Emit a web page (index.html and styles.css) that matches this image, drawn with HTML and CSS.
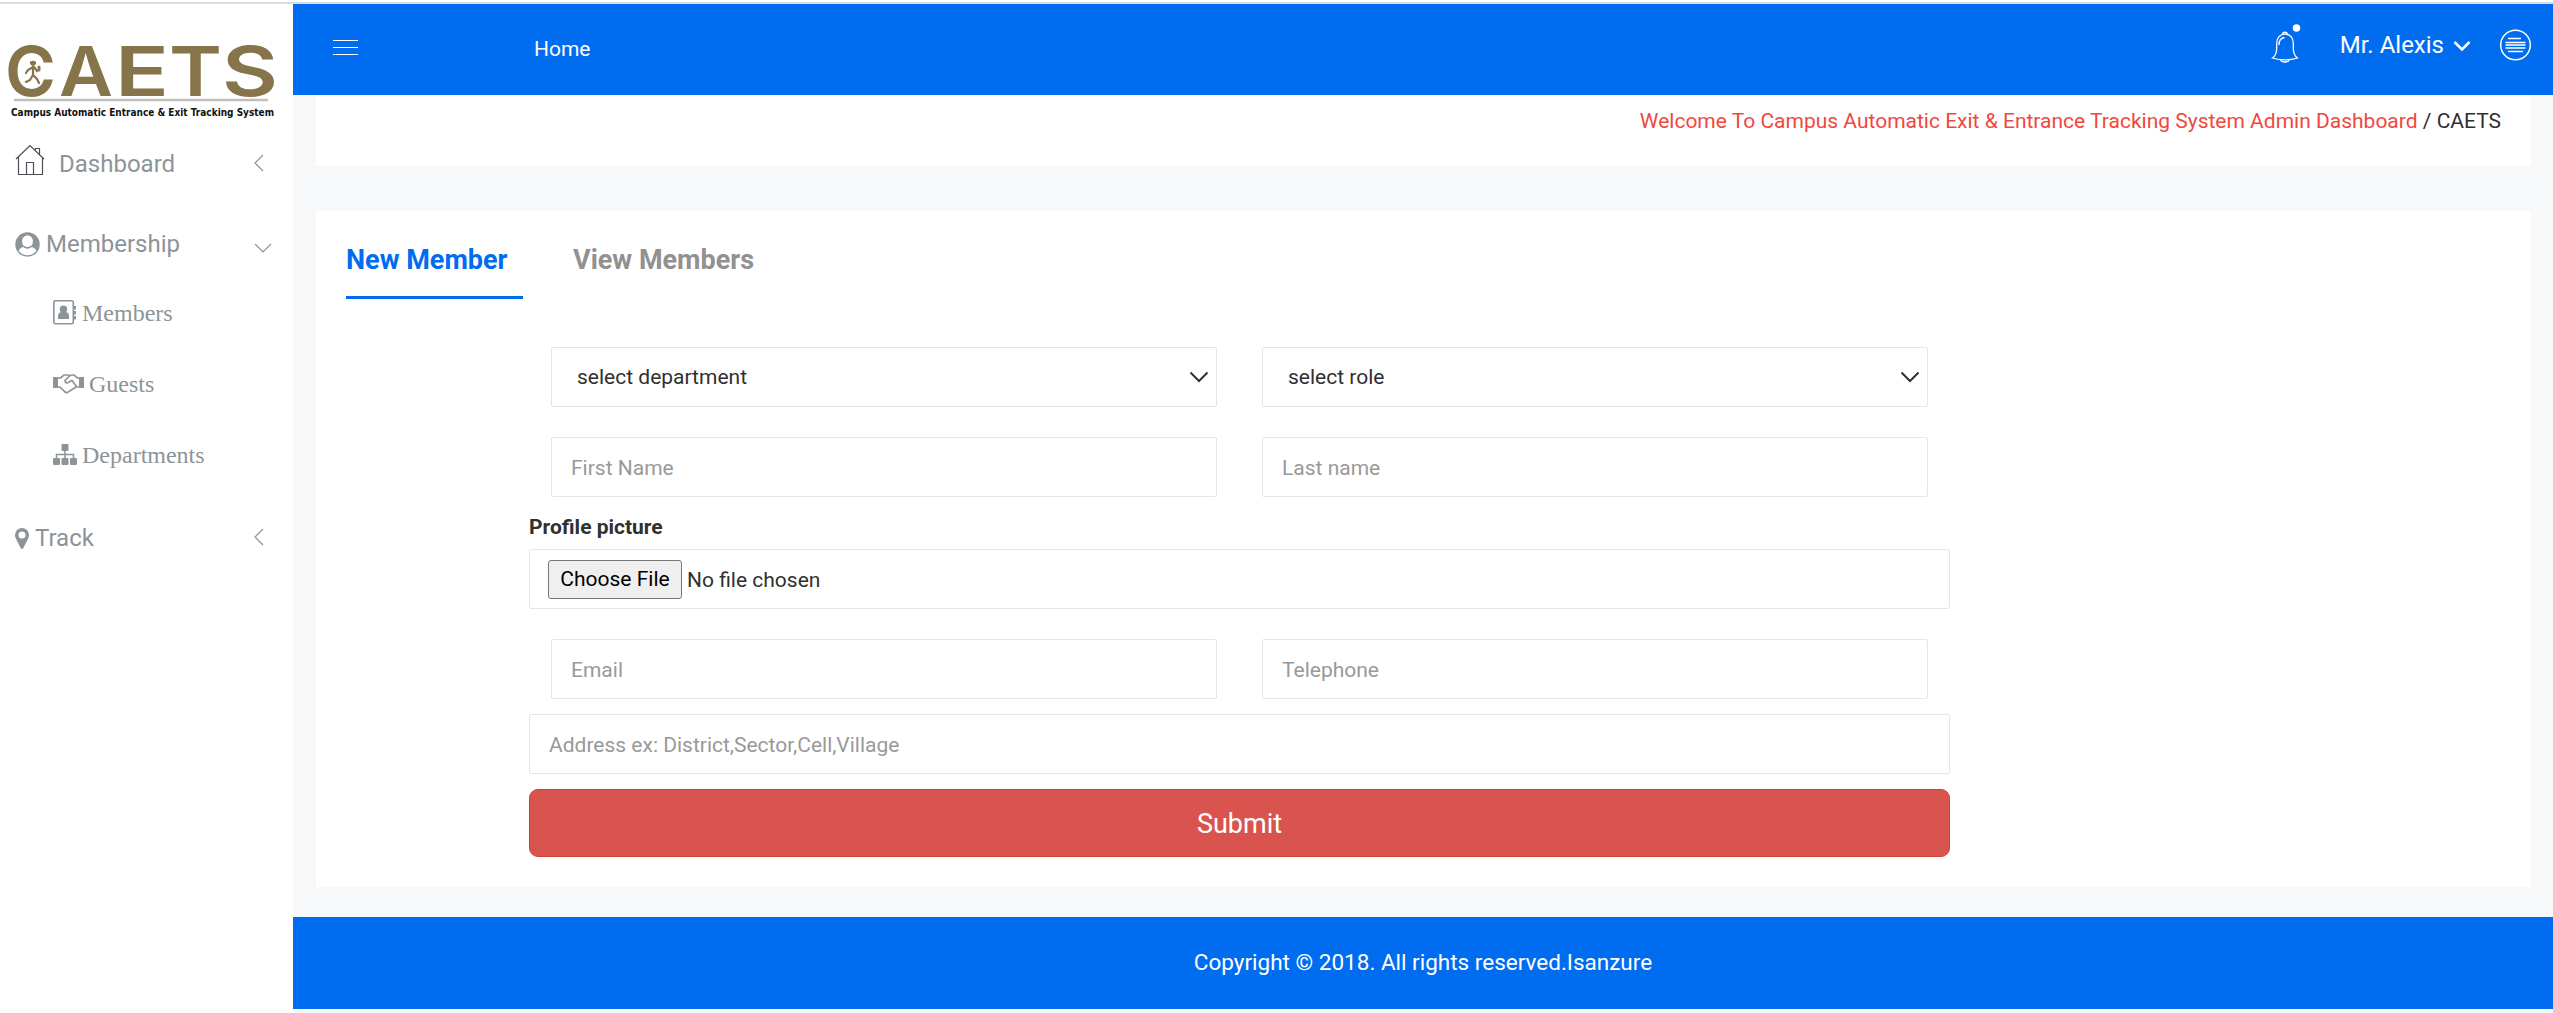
FILE: index.html
```html
<!DOCTYPE html>
<html lang="en">
<head>
<meta charset="utf-8">
<title>CAETS</title>
<link rel="stylesheet" href="styles.css">
</head>
<body>
<div class="topline"></div>
<div class="layout">
  <aside class="sidebar">
    <svg class="logo" viewBox="0 -40 293 120" width="293" height="120">
      <g class="logo-word">
        <text x="5" y="52" textLength="51" lengthAdjust="spacingAndGlyphs">C</text>
        <text x="59" y="52" textLength="54" lengthAdjust="spacingAndGlyphs">A</text>
        <text x="115" y="52" textLength="54" lengthAdjust="spacingAndGlyphs">E</text>
        <text x="169" y="52" textLength="53" lengthAdjust="spacingAndGlyphs">T</text>
        <text x="222" y="52" textLength="56" lengthAdjust="spacingAndGlyphs">S</text>
      </g>
      <g fill="none" stroke="#86754b" stroke-width="2.2" stroke-linecap="round">
        <path d="M33 22v10M33 23l-5 3-2 3M34 23l3 4M33 31l-3 5-4 2M33 31l4 4 2 4"/>
        <ellipse cx="33" cy="19" rx="2" ry="1.2"/>
        <path d="M39 23v3" stroke-width="3"/>
      </g>
      <path d="M14 56H268" stroke="#bfbfbd" stroke-width="2.6"/>
      <text class="logo-tag" x="11" y="72" textLength="263" lengthAdjust="spacingAndGlyphs">Campus Automatic Entrance &amp; Exit Tracking System</text>
    </svg>
    <nav class="menu">
      <a class="item dash"><svg width="30" height="32" viewBox="0 0 30 32"><path d="M1 15 15 1.500 29 15M3.500 13v17.500h24V13M11.500 30.500V18.500h7v12M20.500 6V4.500h4v6" fill="none" stroke="#4b4f55" stroke-width="1.200"/></svg><span>Dashboard</span><svg class="arrow" width="10" height="18" viewBox="0 0 10 18"><path d="M9 1 1 9l8 8"/></svg></a>
      <a class="item member"><svg width="25" height="25" viewBox="0 0 25 25"><circle cx="12.500" cy="12.500" r="12.200" fill="#8d9498"/><path d="M12.500 3.500c3.400 0 5.400 2.500 5.400 5.700 0 2.400-1 4.500-2.600 5.500 3.500.4 5.600 2.300 6 4.200a11 11 0 0 1-17.600 0c.4-1.900 2.500-3.800 6-4.200-1.600-1-2.600-3.100-2.600-5.500 0-3.200 2-5.700 5.400-5.700z" fill="#fff"/><path d="M8.700 14.300c2.200 1.800 5.400 1.800 7.600 0" fill="none" stroke="#8d9498" stroke-width="1.500"/></svg><span>Membership</span><svg class="arrow down" width="18" height="10" viewBox="0 0 18 10"><path d="m1 1 8 8 8-8"/></svg></a>
      <a class="item sub"><svg width="24" height="25" viewBox="0 0 24 25"><rect x=".8" y=".8" width="19.500" height="23" rx="1.500" fill="none" stroke="#8d9498" stroke-width="1.600"/><path d="M21 6h2v3.500h-2zM21 11h2v3.500h-2zM21 16h2v3.500h-2z" fill="#8d9498"/><circle cx="10.500" cy="9.300" r="3.700" fill="#8d9498"/><path d="M5 19v-2.500c0-3 1.500-4.500 3.300-4.500h4.400c1.800 0 3.300 1.500 3.300 4.500V19z" fill="#8d9498"/></svg><span>Members</span></a>
      <a class="item sub"><svg width="31" height="20" viewBox="0 0 31 20"><path d="M0 3h5v11H0zM26 3h5v11h-5z" fill="#8d9498"/><path d="M5 4h2.500L11 1h4l1.500 1L18 1h3l3.500 3H26M5 13h2l4.500 4.500c1.500 1.300 3.200 1.300 4.500 0l7-4.500h3M16.500 2 12 6.500c0 3 3.500 3 5.500.5l1.500-.5 4.500 6" fill="none" stroke="#8d9498" stroke-width="1.700"/></svg><span>Guests</span></a>
      <a class="item sub"><svg width="24" height="21" viewBox="0 0 24 21"><g fill="#8d9498"><rect x="8.500" width="7" height="7" rx="1"/><rect y="14" width="7" height="7" rx="1"/><rect x="8.500" y="14" width="7" height="7" rx="1"/><rect x="17" y="14" width="7" height="7" rx="1"/></g><path d="M12 7v7M3.500 14v-3.500h17V14" fill="none" stroke="#8d9498" stroke-width="1.500"/></svg><span>Departments</span></a>
      <a class="item track"><svg width="14" height="21" viewBox="0 0 14 21"><path fill-rule="evenodd" d="M7 0a7 7 0 0 1 7 7c0 2-.6 3-1.200 4.300L8.200 20.300a1.400 1.400 0 0 1-2.400 0L1.200 11.300C.6 10 0 9 0 7a7 7 0 0 1 7-7zm0 3.500a3.500 3.500 0 1 0 0 7 3.500 3.500 0 0 0 0-7z" fill="#8d9498"/></svg><span>Track</span><svg class="arrow" width="10" height="18" viewBox="0 0 10 18"><path d="M9 1 1 9l8 8"/></svg></a>
    </nav>
  </aside>
  <main class="main">
    <header class="header">
      <svg class="burger" width="25" height="16" viewBox="0 0 25 16"><path d="M0 .5h25M0 7.500h25M0 14.500h25" stroke="#fff"/></svg>
      <a class="home">Home</a>
      <svg class="bell" width="30" height="40" viewBox="0 0 30 40"><g fill="none" stroke="#fff" stroke-width="1.300"><path d="M1.500 34c3-2 4.200-5 4.200-10v-4.500c0-5.500 3-9.300 8.300-9.300s8.300 3.800 8.300 9.300V24c0 5 1.200 8 4.200 10-8 2.500-17 2.500-25 0z"/><path d="M11.500 10.500c0-3 5-3 5 0M9.500 35.500c1 3.300 8 3.300 9 0M8 21c0-4 1.500-7 5.500-7.500"/></g><circle cx="25.500" cy="4" r="3.800" fill="#fff"/></svg>
      <span class="user">Mr. Alexis</span>
      <svg class="caret" width="18" height="12" viewBox="0 0 18 12"><path d="m1.500 2 7.500 7.500L16.500 2" fill="none" stroke="#fff" stroke-width="2.500"/></svg>
      <svg class="round" width="32" height="32" viewBox="0 0 32 32"><circle cx="16.500" cy="16" r="14.800" fill="none" stroke="#fff" stroke-width="1.500"/><path d="M9 9.500h13M6.500 13.500h20M6.500 16h20M6.500 19h20M9 22.500h15" stroke="#fff" stroke-width="1.300"/></svg>
    </header>
    <div class="crumb"><p><a>Welcome To Campus Automatic Exit &amp; Entrance Tracking System Admin Dashboard</a> / CAETS</p></div>
    <section class="card">
      <div class="tabs"><a class="tab active">New Member</a><a class="tab">View Members</a></div>
      <form class="form">
        <div class="pair">
          <div class="field select"><span>select department</span><svg width="20" height="12" viewBox="0 0 20 12"><path d="m1.500 1.500 8.500 8.500 8.500-8.500"/></svg></div>
          <div class="field select"><span>select role</span><svg width="20" height="12" viewBox="0 0 20 12"><path d="m1.500 1.500 8.500 8.500 8.500-8.500"/></svg></div>
        </div>
        <div class="pair">
          <input class="field" placeholder="First Name">
          <input class="field" placeholder="Last name">
        </div>
        <label class="label">Profile picture</label>
        <div class="field file"><span class="choose">Choose File</span><span>No file chosen</span></div>
        <div class="pair">
          <input class="field" placeholder="Email">
          <input class="field" placeholder="Telephone">
        </div>
        <input class="field address" placeholder="Address ex: District,Sector,Cell,Village">
        <button class="submit" type="button">Submit</button>
      </form>
    </section>
    <footer class="footer">Copyright © 2018. All rights reserved.Isanzure</footer>
  </main>
</div>
</body>
</html>
```
FILE: styles.css
```css
* { box-sizing: border-box; }
body { margin: 0; height: 1013px; overflow: hidden; background: #fff; color: #303030; font: 21px/30px Roboto, sans-serif; }
.topline { height: 4px; border-top: 2px solid #fff; background: #dcdde2; }
.layout { display: flex; height: 1009px; }
.sidebar { width: 293px; flex: none; }
.logo { display: block; }
.logo-word { font: 600 69px Inter, sans-serif; fill: #86754b; }
.logo-tag { font: bold 11px "DejaVu Sans", sans-serif; fill: #111; }

.menu { color: #8d9498; font-size: 24px; }
.item { display: flex; align-items: center; height: 70px; padding: 0 22px 0 15px; }
.arrow { margin: -3px 7px 0 auto; fill: none; stroke: #8d9498; stroke-width: 1.2; }
.arrow.down { margin: 8px -1px 0 auto; }
.dash { height: 80px; gap: 14px; }
.dash > svg:first-child { margin-top: -9px; }
.member { height: 74px; margin-top: 3px; margin-bottom: -3px; gap: 6px; }
.sub { height: 71px; padding-left: 53px; gap: 5px; font: 24px "Liberation Serif", serif; }
.sub > svg { margin-top: -2px; }
.track { height: 94px; gap: 6px; }

.main { flex: 1; background: #f6f8fa; }
.header { display: flex; align-items: center; height: 91px; padding: 0 22px 8px 40px; background: #006df0; color: #fff; }
.burger { margin-top: 5px; }
.home { margin: 7px auto 0 176px; }
.bell { margin: -3px 39px 0 0; }
.user { margin-top: -2px; font-size: 24px; }
.caret { margin: 0 28px 0 9px; }
.round { margin-top: -1px; }
.crumb { height: 71px; margin: 0 22px 45px 23px; padding: 11px 30px; background: #fff; text-align: right; }
.crumb p { margin: 0; }
.crumb a { color: #f0483e; }

.card { height: 676px; margin: 0 22px 30px 23px; padding: 30px; background: #fff; }
.tabs { display: flex; gap: 50px; color: #919191; font-size: 27px; font-weight: 700; line-height: 38px; }
.tab { height: 58px; }
.tab.active { width: 177px; color: #006df0; border-bottom: 3px solid #006df0; }
.form { width: 1421px; margin: 48px 0 0 183px; }
.pair { display: flex; gap: 45px; margin: 0 22px 30px; }
.field { display: flex; align-items: center; width: 100%; height: 60px; padding: 1px 19px 0; border: 1px solid #e5e6e7; border-radius: 2px; background: #fff; color: #303030; font: 21px Roboto, sans-serif; }
.field::placeholder { color: #999; opacity: 1; }
.select { justify-content: space-between; padding: 0 7px 0 25px; }
.select svg { fill: none; stroke: #333; stroke-width: 2; }
.label { display: block; height: 37px; margin-top: -15px; font-weight: 700; }
.file { gap: 5px; margin-bottom: 30px; padding: 1px 18px 0; }
.choose { width: 134px; height: 39px; margin-top: -1px; border: 1px solid #767676; border-radius: 3px; background: #efefef; color: #000; line-height: 36px; text-align: center; }
.address { margin: -15px 0 15px; }
.submit { display: block; width: 100%; height: 68px; padding: 1px 0 0; border: 1px solid #d43f3a; border-radius: 9px; background: #d9534f; color: #fff; font: 27px Roboto, sans-serif; }
.footer { height: 92px; background: #006df0; color: #fff; font-size: 22.5px; line-height: 90px; text-align: center; }
```
